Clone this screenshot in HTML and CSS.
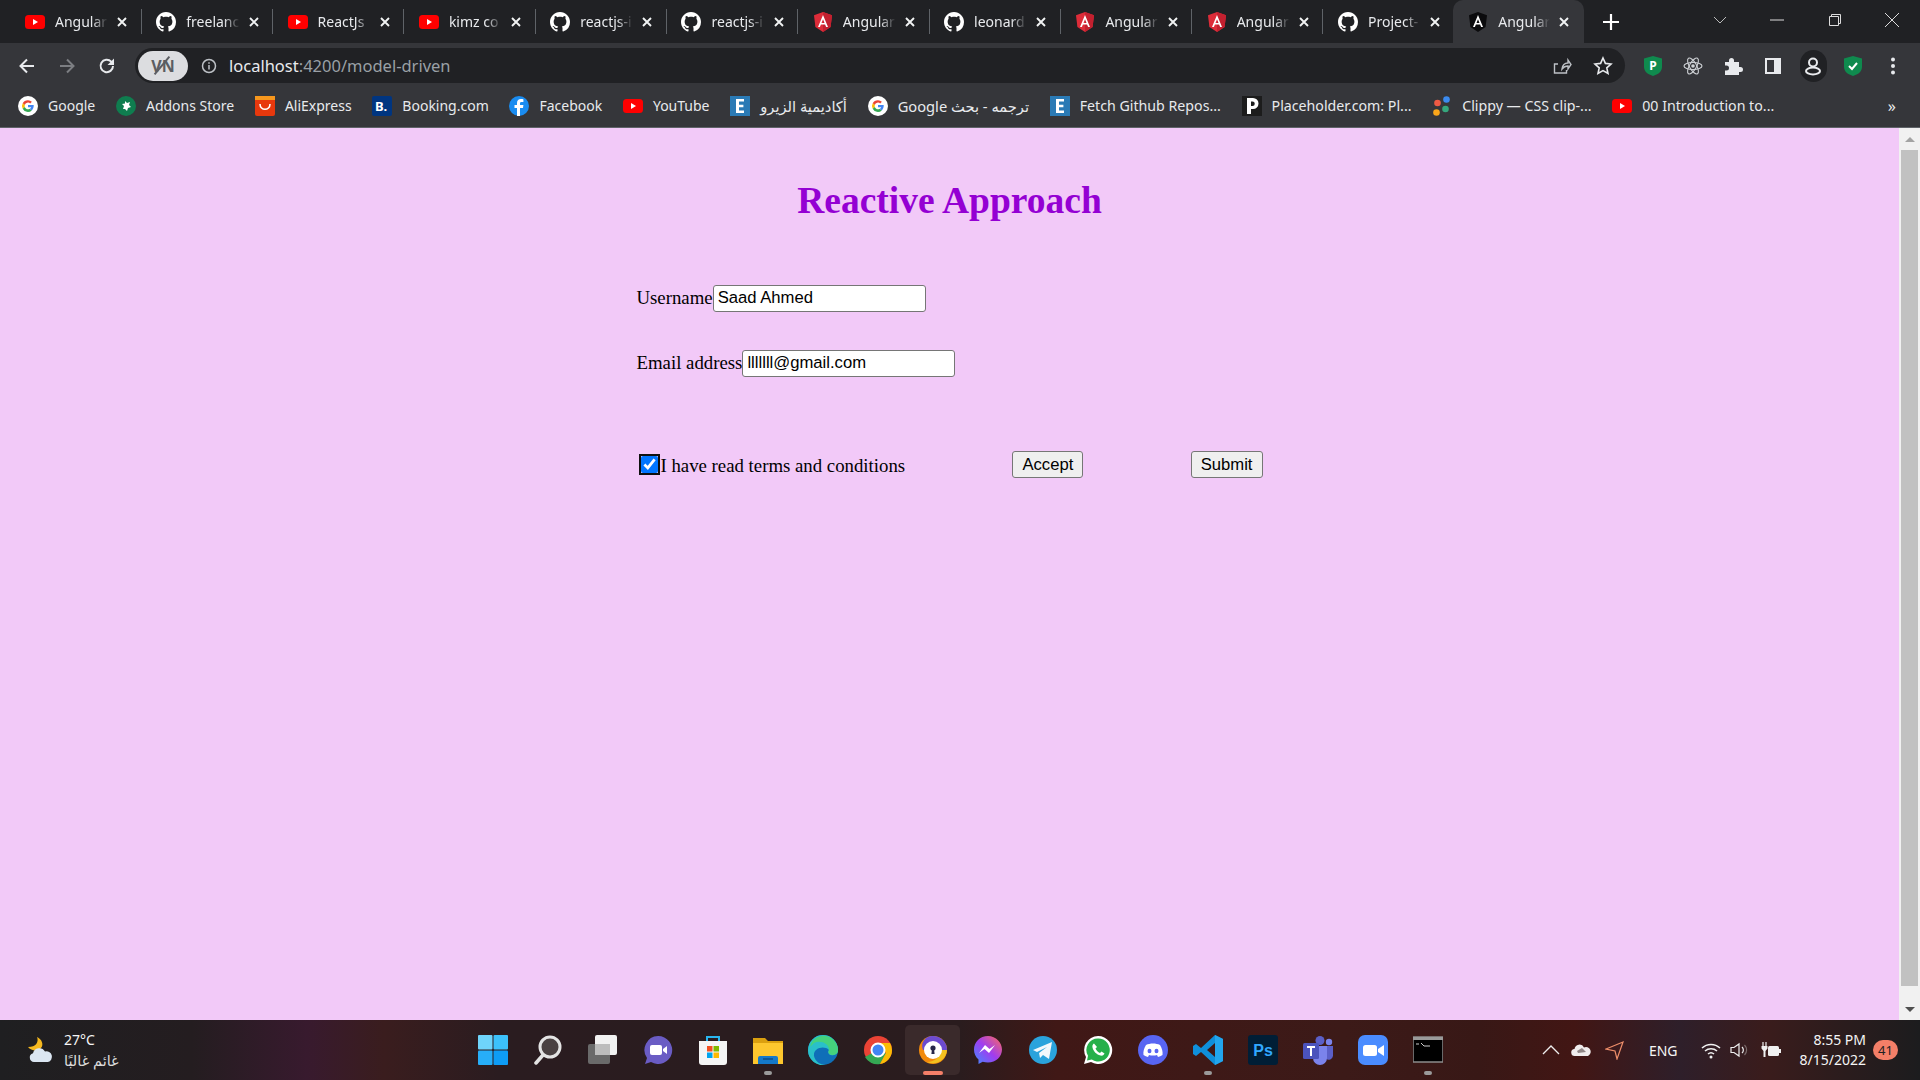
FILE: index.html
```html
<!DOCTYPE html>
<html lang="en">

<head>
    <meta charset="UTF-8">
    <title>Angular</title>
    <link rel="stylesheet" href="styles.css">
</head>

<body>
    <svg class="defs" width="0" height="0">
        <symbol id="yt" viewBox="0 0 20 14"><rect width="20" height="14" rx="3.5" fill="#f00"/><path d="M8 4l5 3-5 3z" fill="#fff"/></symbol>
        <symbol id="gh" viewBox="0 0 16 16"><path fill="#fff" d="M8 0C3.58 0 0 3.58 0 8c0 3.54 2.29 6.53 5.47 7.59.4.07.55-.17.55-.38 0-.19-.01-.82-.01-1.49-2.01.37-2.53-.49-2.69-.94-.09-.23-.48-.94-.82-1.13-.28-.15-.68-.52-.01-.53.63-.01 1.08.58 1.23.82.72 1.21 1.87.87 2.33.66.07-.52.28-.87.51-1.07-1.78-.2-3.64-.89-3.64-3.95 0-.87.31-1.59.82-2.15-.08-.2-.36-1.02.08-2.12 0 0 .67-.21 2.2.82.64-.18 1.32-.27 2-.27.68 0 1.36.09 2 .27 1.53-1.04 2.2-.82 2.2-.82.44 1.1.16 1.92.08 2.12.51.56.82 1.27.82 2.15 0 3.07-1.87 3.75-3.65 3.95.29.25.54.73.54 1.48 0 1.07-.01 1.93-.01 2.2 0 .21.15.46.55.38A8.013 8.013 0 0016 8c0-4.42-3.58-8-8-8z"/></symbol>
        <symbol id="ng" viewBox="0 0 18 20"><path d="M9 0L0 3.2l1.4 11.9L9 20l7.6-4.9L18 3.2z" fill="#dd2c39"/><path d="M9 0v20l7.6-4.9L18 3.2z" fill="#c3202f"/><path d="M9 3L4 15h1.9l1-2.6h4.2l1 2.6H14zm-1.5 7.9L9 7.2l1.5 3.7z" fill="#fff"/></symbol>
        <symbol id="ngb" viewBox="0 0 18 20"><path d="M9 0L0 3.2l1.4 11.9L9 20l7.6-4.9L18 3.2z" fill="#0b0b0d"/><path d="M9 3L4 15h1.9l1-2.6h4.2l1 2.6H14zm-1.5 7.9L9 7.2l1.5 3.7z" fill="#fff"/></symbol>
        <symbol id="g" viewBox="0 0 20 20"><circle cx="10" cy="10" r="10" fill="#fff"/><path d="M10 4.2a5.8 5.8 0 0 1 3.9 1.5l-1.7 1.7A3.4 3.4 0 0 0 6.8 9L4.7 7.3A5.8 5.8 0 0 1 10 4.2z" fill="#ea4335"/><path d="M4.7 7.3L6.8 9a3.5 3.5 0 0 0 0 2.1l-2.1 1.6a5.9 5.9 0 0 1 0-5.4z" fill="#fbbc05"/><path d="M6.8 11.1a3.4 3.4 0 0 0 5 1.7l2 1.6a5.8 5.8 0 0 1-9.1-1.7z" fill="#34a853"/><path d="M15.7 9H10v2.3h3.2a2.9 2.9 0 0 1-1.4 1.5l2 1.6c1.3-1.2 2-3.1 1.9-5.4z" fill="#4285f4"/></symbol>
        <symbol id="e" viewBox="0 0 20 20"><rect width="20" height="20" fill="#2a7ab5"/><path d="M6 3h8v2.6H9v3.2h4.4v2.5H9v3.1h5V17H6z" fill="#fff"/></symbol>
        <symbol id="x" viewBox="0 0 10 10"><path d="M1 1l8 8M9 1L1 9" stroke="#f1f3f4" stroke-width="1.900"/></symbol>
    </svg>

    <header class="tabstrip">
        <div class="tab"><svg class="fav-yt"><use href="#yt"/></svg><span class="tab-title">Angular</span><svg class="tab-x"><use href="#x"/></svg></div>
        <div class="tab"><svg class="fav"><use href="#gh"/></svg><span class="tab-title">freelanc</span><svg class="tab-x"><use href="#x"/></svg></div>
        <div class="tab"><svg class="fav-yt"><use href="#yt"/></svg><span class="tab-title">ReactJs</span><svg class="tab-x"><use href="#x"/></svg></div>
        <div class="tab"><svg class="fav-yt"><use href="#yt"/></svg><span class="tab-title">kimz co</span><svg class="tab-x"><use href="#x"/></svg></div>
        <div class="tab"><svg class="fav"><use href="#gh"/></svg><span class="tab-title">reactjs-i</span><svg class="tab-x"><use href="#x"/></svg></div>
        <div class="tab"><svg class="fav"><use href="#gh"/></svg><span class="tab-title">reactjs-i</span><svg class="tab-x"><use href="#x"/></svg></div>
        <div class="tab"><svg class="fav"><use href="#ng"/></svg><span class="tab-title">Angular</span><svg class="tab-x"><use href="#x"/></svg></div>
        <div class="tab"><svg class="fav"><use href="#gh"/></svg><span class="tab-title">leonard</span><svg class="tab-x"><use href="#x"/></svg></div>
        <div class="tab"><svg class="fav"><use href="#ng"/></svg><span class="tab-title">Angular</span><svg class="tab-x"><use href="#x"/></svg></div>
        <div class="tab"><svg class="fav"><use href="#ng"/></svg><span class="tab-title">Angular</span><svg class="tab-x"><use href="#x"/></svg></div>
        <div class="tab tab-last"><svg class="fav"><use href="#gh"/></svg><span class="tab-title">Project-</span><svg class="tab-x"><use href="#x"/></svg></div>
        <div class="tab tab-active"><svg class="fav"><use href="#ngb"/></svg><span class="tab-title">Angular</span><svg class="tab-x"><use href="#x"/></svg></div>
        <svg class="new-tab" viewBox="0 0 16 16"><path d="M8 0v16M0 8h16" stroke="#fff" stroke-width="2.200"/></svg>
        <div class="win-controls">
            <svg class="win-icon" viewBox="0 0 14 14"><path d="M1 4l6 6 6-6" fill="none" stroke="#bbb"/></svg>
            <svg class="win-icon" viewBox="0 0 14 14"><path d="M0 7h14" stroke="#ddd"/></svg>
            <svg class="win-icon" viewBox="0 0 14 14"><path d="M1.500 3.500h9v9h-9zM3.500 3.500v-2h9v9h-2" fill="none" stroke="#ddd"/></svg>
            <svg class="win-icon" viewBox="0 0 14 14"><path d="M0 0l14 14M14 0L0 14" stroke="#ddd"/></svg>
        </div>
    </header>

    <div class="toolbar">
        <svg class="nav-icon" viewBox="0 0 20 20"><path d="M17 10H4M10 3.500L3.500 10l6.500 6.500" fill="none" stroke="#e8eaed" stroke-width="2"/></svg>
        <svg class="nav-icon" viewBox="0 0 20 20"><path d="M3 10h13M10 3.500l6.500 6.500-6.500 6.500" fill="none" stroke="#7c7e82" stroke-width="2"/></svg>
        <svg class="nav-icon" viewBox="0 0 20 20"><path d="M16 10a6.200 6.200 0 1 1-1.800-4.400L16.500 8" fill="none" stroke="#e8eaed" stroke-width="2"/><path d="M17 2.500V9h-6.500z" fill="#e8eaed"/></svg>
        <div class="omnibox">
            <span class="vpn">V<i class="vpn-slash"></i>N</span>
            <svg class="info" viewBox="0 0 16 16"><circle cx="8" cy="8" r="6.500" fill="none" stroke="#bdc1c6" stroke-width="1.500"/><path d="M8 7v4.500M8 4.300v1.500" stroke="#bdc1c6" stroke-width="1.500"/></svg>
            <span class="url"><span class="host">localhost</span>:4200/model-driven</span>
            <svg class="omni-icon" viewBox="0 0 20 20"><path d="M7 17H2.500V8H6M10 13c.5-4 3-6 6-6V4l3 4.500-3 4.500v-3c-2.500 0-4.500 1-6 3zM2.500 17h12v-3" fill="none" stroke="#bdc1c6" stroke-width="1.400"/></svg>
            <svg class="omni-icon" viewBox="0 0 20 20"><path d="M10 2l2.400 5.400 5.600.6-4.200 3.800 1.200 5.700L10 14.600 5 17.500l1.200-5.700L2 8l5.600-.6z" fill="none" stroke="#e8eaed" stroke-width="1.600"/></svg>
        </div>
        <div class="ext-row">
            <svg class="ext" viewBox="0 0 18 20"><path d="M9 0l9 2.500V11c0 4.500-4 7.500-9 9-5-1.500-9-4.500-9-9V2.500z" fill="#0f8a4e"/><text x="9" y="14" class="shield-letter">P</text></svg>
            <svg class="ext" viewBox="0 0 20 20"><g fill="none" stroke="#cfd2d6" stroke-width="1.100"><ellipse cx="10" cy="10" rx="9" ry="3.500"/><ellipse cx="10" cy="10" rx="9" ry="3.500" transform="rotate(60 10 10)"/><ellipse cx="10" cy="10" rx="9" ry="3.500" transform="rotate(120 10 10)"/></g><circle cx="10" cy="10" r="1.800" fill="#cfd2d6"/></svg>
            <svg class="ext" viewBox="0 0 20 20"><path d="M2 6h4V4.500a2.500 2.500 0 0 1 5 0V6h5v5h1.500a2.500 2.500 0 0 1 0 5H16v3H2v-4.500h1.500a2.500 2.500 0 0 0 0-5H2z" fill="#e8eaed"/></svg>
            <svg class="ext" viewBox="0 0 20 20"><path d="M2 2h16v16H2z" fill="#e8eaed"/><path d="M4 4h7v12H4z" fill="#35363a"/></svg>
            <span class="avatar"><svg class="avatar-icon" viewBox="0 0 20 20"><circle cx="10" cy="6.500" r="4" fill="none" stroke="#e8eaed" stroke-width="2"/><ellipse cx="10" cy="15" rx="7" ry="3.500" fill="none" stroke="#e8eaed" stroke-width="2"/></svg></span>
            <svg class="ext" viewBox="0 0 18 20"><path d="M9 0l9 2.500V11c0 4.500-4 7.500-9 9-5-1.500-9-4.500-9-9V2.500z" fill="#0f8a4e"/><path d="M5 10l3 3 5-6" fill="none" stroke="#fff" stroke-width="2"/></svg>
            <svg class="ext" viewBox="0 0 20 20"><circle cx="10" cy="3.500" r="2" fill="#e8eaed"/><circle cx="10" cy="10" r="2" fill="#e8eaed"/><circle cx="10" cy="16.500" r="2" fill="#e8eaed"/></svg>
        </div>
    </div>

    <nav class="bookmarks">
        <a class="bm"><svg class="bm-icon"><use href="#g"/></svg>Google</a>
        <a class="bm"><svg class="bm-icon" viewBox="0 0 20 20"><circle cx="10" cy="10" r="10" fill="#0f7d4f"/><path d="M9 5l2 2 3-1-1 3 2 2-3 1-1 3-2-2-2 0 1-3-2-2 3-.5z" fill="#fff"/></svg>Addons Store</a>
        <a class="bm"><svg class="bm-icon" viewBox="0 0 20 20"><rect width="20" height="20" rx="2" fill="#e8380d"/><rect width="20" height="4" fill="#f7971d"/><path d="M5 8c0 7 10 7 10 0" fill="none" stroke="#fff" stroke-width="1.600"/></svg>AliExpress</a>
        <a class="bm"><svg class="bm-icon" viewBox="0 0 20 20"><rect width="20" height="20" rx="2" fill="#003580"/><text x="3" y="15" class="bk-letter">B.</text></svg>Booking.com</a>
        <a class="bm"><svg class="bm-icon" viewBox="0 0 20 20"><circle cx="10" cy="10" r="10" fill="#1a8cf0"/><path d="M11 20v-8h3l.4-3H11V7.500c0-1 .4-1.500 1.600-1.500h1.800V3.200C14 3.100 13 3 12 3 9.500 3 8 4.500 8 7v2H5.500v3H8v8z" fill="#fff"/></svg>Facebook</a>
        <a class="bm"><svg class="fav-yt"><use href="#yt"/></svg>YouTube</a>
        <a class="bm"><svg class="bm-icon"><use href="#e"/></svg><span class="bm-ar" dir="rtl">أكاديمية الزيرو</span></a>
        <a class="bm"><svg class="bm-icon"><use href="#g"/></svg><span class="bm-ar" dir="rtl">ترجمه - بحث Google</span></a>
        <a class="bm bm-wide"><svg class="bm-icon"><use href="#e"/></svg>Fetch Github Repos...</a>
        <a class="bm bm-wide"><svg class="bm-icon" viewBox="0 0 20 20"><rect width="20" height="20" fill="#1c1c1c"/><path d="M5 2h6a5 5 0 0 1 0 11H9v5H5zM9 5.500V10h1.500a2.200 2.200 0 0 0 0-4.500z" fill="#fff"/></svg>Placeholder.com: Pl...</a>
        <a class="bm bm-wide"><svg class="bm-icon" viewBox="0 0 20 20"><circle cx="14.500" cy="3.500" r="3.300" fill="#3b8bf0"/><circle cx="5.500" cy="7" r="3.300" fill="#ef5a44"/><circle cx="13.500" cy="13" r="3.300" fill="#35a77d"/><circle cx="4.500" cy="16.500" r="3.300" fill="#f9a51a"/></svg>Clippy — CSS clip-...</a>
        <a class="bm bm-wide"><svg class="fav-yt"><use href="#yt"/></svg>00 Introduction to...</a>
        <span class="bm-more">»</span>
    </nav>

    <div class="viewport">
        <main class="page">
            <h1 class="page-title">Reactive Approach</h1>
            <form class="signup">
                <div class="field"><label>Username</label><input type="text" value="Saad Ahmed"></div>
                <div class="field"><label>Email address</label><input type="text" value="lllllll@gmail.com"></div>
                <div class="actions">
                    <div class="terms"><input type="checkbox" class="terms-box" checked><span class="terms-text">I have read terms and conditions</span></div>
                    <button type="button" class="btn">Accept</button>
                    <button type="button" class="btn">Submit</button>
                </div>
            </form>
        </main>
        <div class="scrollbar">
            <span class="arrow-up"></span>
            <div class="thumb"></div>
            <span class="arrow-down"></span>
        </div>
    </div>

    <footer class="taskbar">
        <div class="weather">
            <svg class="weather-icon" viewBox="0 0 28 26"><path d="M11 0c2 5-1 10-9 10 3 4 10 5 13 1 3-3 1-9-4-11z" fill="#f5b81f"/><path d="M8 25a4.500 4.500 0 0 1-1-8.800 6.500 6.500 0 0 1 12-1.700A5.300 5.300 0 0 1 22 25z" fill="#dbe6f2"/></svg>
            <div class="weather-text"><span>27°C</span><span class="weather-sub" dir="rtl">غائم غالبًا</span></div>
        </div>
        <div class="task-icons">
            <span class="task"><svg class="task-svg" viewBox="0 0 30 30"><rect x="0" y="0" width="14.500" height="14.500" rx="1" fill="#6fd4fb"/><rect x="15.500" y="0" width="14.500" height="14.500" rx="1" fill="#3cc1fb"/><rect x="0" y="15.500" width="14.500" height="14.500" rx="1" fill="#27aef8"/><rect x="15.500" y="15.500" width="14.500" height="14.500" rx="1" fill="#0e9cf5"/></svg></span>
            <span class="task"><svg class="task-svg" viewBox="0 0 30 30"><circle cx="17" cy="12" r="10" fill="#4a4142" stroke="#e4e4e4" stroke-width="3"/><path d="M10 20l-7 8" stroke="#e4e4e4" stroke-width="3.500" stroke-linecap="round"/></svg></span>
            <span class="task"><svg class="task-svg" viewBox="0 0 30 30"><rect x="0" y="9" width="22" height="20" rx="2" fill="#6a6a6a"/><rect x="7" y="0" width="22" height="20" rx="2" fill="#f2f2f2"/><rect x="7" y="9" width="15" height="11" fill="#bdbdbd"/></svg></span>
            <span class="task"><svg class="task-svg" viewBox="0 0 30 30"><path d="M15 1a14 14 0 1 1-7 26l-6 2 2-6A14 14 0 0 1 15 1z" fill="#6a5cc4"/><rect x="7" y="10" width="12" height="10" rx="2" fill="#fff"/><path d="M20 14l4-3v8l-4-3z" fill="#fff"/></svg></span>
            <span class="task"><svg class="task-svg" viewBox="0 0 30 30"><path d="M1 6h28v21a3 3 0 0 1-3 3H4a3 3 0 0 1-3-3z" fill="#f5f5f5"/><path d="M9 6V2h12v4" fill="none" stroke="#29b6f0" stroke-width="2"/><rect x="9" y="11" width="5.500" height="5.500" fill="#f25022"/><rect x="15.500" y="11" width="5.500" height="5.500" fill="#7fba00"/><rect x="9" y="17.500" width="5.500" height="5.500" fill="#00a4ef"/><rect x="15.500" y="17.500" width="5.500" height="5.500" fill="#ffb900"/></svg></span>
            <span class="task task-open"><svg class="task-svg" viewBox="0 0 30 30"><path d="M0 3h12l3 3h15v23H0z" fill="#dba00f"/><path d="M0 8h30v21H0z" fill="#fdc72e"/><path d="M5 29v-6a2 2 0 0 1 2-2h16a2 2 0 0 1 2 2v6z" fill="#1479c9"/><path d="M10 24h10" stroke="#0c4d85" stroke-width="1.500"/></svg></span>
            <span class="task"><svg class="task-svg" viewBox="0 0 30 30"><circle cx="15" cy="15" r="15" fill="#0f6fb8"/><path d="M0 15A15 15 0 0 1 30 15c0 2-1 4-4 5-4 1-7-1-5-5-5-5-16-2-15 6 1 5 6 9 12 9A15 15 0 0 1 0 15z" fill="#2ac0c8"/><path d="M2 12C4 3 12 0 18 1c8 1 12 9 12 14 0 2-1 5-5 5-3 0-6-2-4-5C21 8 12 5 6 8z" fill="#45d27d"/></svg></span>
            <span class="task"><svg class="task-svg" viewBox="0 0 30 30"><circle cx="15" cy="15" r="14" fill="#ea4335"/><path d="M2 22A14 14 0 0 0 17 29l6-11H9z" fill="#34a853"/><path d="M29 15a14 14 0 0 0-2-7H15l8 10-6 11A14 14 0 0 0 29 15z" fill="#fbbc05"/><circle cx="15" cy="15" r="6.500" fill="#4285f4" stroke="#fff" stroke-width="2"/></svg></span>
            <span class="task task-active"><svg class="task-svg" viewBox="0 0 30 30"><circle cx="15" cy="15" r="14" fill="#f28a0c"/><path d="M15 1a14 14 0 0 1 14 14H5A10 10 0 0 1 15 1z" fill="#6c4bd0"/><path d="M29 15a14 14 0 0 1-20 12c8 0 13-5 14-12z" fill="#f4c21f"/><circle cx="15" cy="15" r="9" fill="#fff"/><circle cx="15" cy="13" r="2.600" fill="#26264a"/><path d="M14 14h2l.6 5h-3.200z" fill="#26264a"/></svg></span>
            <span class="task"><svg class="task-svg" viewBox="0 0 30 30"><defs><linearGradient id="msgr" x1="0" y1="1" x2="1" y2="0"><stop offset="0" stop-color="#3f8cff"/><stop offset=".5" stop-color="#a03cf0"/><stop offset="1" stop-color="#ff6c5c"/></linearGradient></defs><path d="M15 1C7 1 1 7 1 14.500c0 4 1.600 7.500 4.500 10V29l4.200-2.300c1.600.5 3.500.8 5.300.8 8 0 14-6 14-13S23 1 15 1z" fill="url(#msgr)"/><path d="M6 18l6-8 4.500 4 5.500-4-6 8-4.500-4z" fill="#fff"/></svg></span>
            <span class="task"><svg class="task-svg" viewBox="0 0 30 30"><circle cx="15" cy="15" r="14" fill="#2aa3dc"/><path d="M5 15l19-8-3 17-6-4-3 3-1-5 8-6-10 5z" fill="#f3f8fb"/></svg></span>
            <span class="task"><svg class="task-svg" viewBox="0 0 30 30"><path d="M15 1a14 14 0 0 0-12 21L1 29l7-2A14 14 0 1 0 15 1z" fill="#fff"/><path d="M15 3.500a11.500 11.500 0 0 0-10 17.300L4 25.500l4.800-1A11.500 11.500 0 1 0 15 3.500z" fill="#25b04a"/><path d="M11 8.500c-1 .5-2 2-1.500 4 1 4 4 7 8 8 2 .5 3.500-.5 4-2l-3-2-1.500 1.500c-2-1-3.500-2.500-4.500-4.500l1.500-1.500z" fill="#fff"/></svg></span>
            <span class="task"><svg class="task-svg" viewBox="0 0 30 30"><circle cx="15" cy="15" r="15" fill="#5865f2"/><path d="M8 10c4-2 10-2 14 0 2 3 3 7 2.500 10-1.500 1-3 1.700-4.500 2l-1-2c-2.500.7-5.500.7-8 0l-1 2c-1.500-.3-3-1-4.500-2C5 17 6 13 8 10z" fill="#fff"/><ellipse cx="11.500" cy="16" rx="2" ry="2.300" fill="#5865f2"/><ellipse cx="18.500" cy="16" rx="2" ry="2.300" fill="#5865f2"/></svg></span>
            <span class="task task-open"><svg class="task-svg" viewBox="0 0 30 30"><path d="M22 0l8 4v22l-8 4-14-13-5 4-3-2v-8l3-2 5 4zM22 8l-8 7 8 7z" fill="#0f8fdb"/><path d="M22 0l8 4v22l-8 4z" fill="#22a6ee"/></svg></span>
            <span class="task"><svg class="task-svg" viewBox="0 0 30 30"><rect width="30" height="30" rx="3" fill="#001e36"/><text x="15" y="21" class="ps-letters">Ps</text></svg></span>
            <span class="task"><svg class="task-svg" viewBox="0 0 30 30"><circle cx="17" cy="5.500" r="4.500" fill="#5b5fc7"/><circle cx="26" cy="7" r="3.200" fill="#7b83eb"/><path d="M21 11h9v10a4.500 4.500 0 0 1-7 3z" fill="#5b5fc7"/><path d="M9 11h15v12a7 7 0 0 1-14 0z" fill="#7b83eb"/><rect x="0" y="8" width="16" height="16" rx="1.500" fill="#4b53bc"/><path d="M4 11h8v2H9v8H7v-8H4z" fill="#fff"/></svg></span>
            <span class="task"><svg class="task-svg" viewBox="0 0 30 30"><rect width="30" height="30" rx="7" fill="#4a8cff"/><rect x="5" y="10" width="14" height="11" rx="2.500" fill="#fff"/><path d="M20 14l6-4v11l-6-4z" fill="#fff"/></svg></span>
            <span class="task task-open"><svg class="task-svg" viewBox="0 0 30 30"><rect y="2" width="30" height="25" fill="#000" stroke="#8c8c8c" stroke-width="1.500"/><rect y="2" width="30" height="3" fill="#9a9a9a"/><path d="M3 9h3M8 8l3 3h6" stroke="#ccc"/></svg></span>
        </div>
        <div class="tray">
            <svg class="tray-icon" viewBox="0 0 20 20"><path d="M2 14l8-8 8 8" fill="none" stroke="#eee" stroke-width="1.300"/></svg>
            <svg class="tray-icon tray-cloud" viewBox="0 0 20 20"><path d="M4 16a3.500 3.500 0 0 1-.5-7 5 5 0 0 1 9.500-1.500A4.500 4.500 0 0 1 17 16z" fill="#f0eded"/><path d="M6 11l5-3 4 4-8 1z" fill="#8f8686"/></svg>
            <svg class="tray-icon tray-nav" viewBox="0 0 20 20"><path d="M1 9L18 2l-6 17-2-8z" fill="none" stroke="#ee8e6a" stroke-width="1.200"/></svg>
            <span class="lang">ENG</span>
            <svg class="tray-icon" viewBox="0 0 20 20"><path d="M1 8a13 13 0 0 1 18 0M4 11a9 9 0 0 1 12 0M7 14a4.500 4.500 0 0 1 6 0" fill="none" stroke="#f0f0f0" stroke-width="1.500"/><circle cx="10" cy="17" r="1.500" fill="#f0f0f0"/></svg>
            <svg class="tray-icon tray-sound" viewBox="0 0 20 20"><path d="M2 7.500h3L10 4v12l-5-3.500H2z" fill="none" stroke="#f0f0f0" stroke-width="1.200"/><path d="M13 7a4 4 0 0 1 0 6" fill="none" stroke="#f0f0f0" stroke-width="1.200"/><path d="M15.500 5a7 7 0 0 1 0 10" fill="none" stroke="#7a6a6a" stroke-width="1.200"/></svg>
            <svg class="tray-icon tray-power" viewBox="0 0 20 20"><rect x="7" y="6" width="11" height="10" rx="1.500" fill="#f0f0f0"/><rect x="18" y="9" width="2" height="4" fill="#f0f0f0"/><path d="M2 2v4M5 2v4" stroke="#f0f0f0" stroke-width="1.200"/><path d="M0.500 6h6v2.500L4.500 11v6h-2v-6L.5 8.500z" fill="#f0f0f0"/></svg>
            <div class="clock"><span>8:55 PM</span><span>8/15/2022</span></div>
            <span class="badge">41</span>
        </div>
    </footer>
</body>

</html>
```

FILE: styles.css
```css
* {
    box-sizing: border-box;
}

html,
body {
    height: 100%;
    margin: 0;
    overflow: hidden;
}

body {
    display: flex;
    flex-direction: column;
    font-family: "Noto Sans", "DejaVu Sans", sans-serif;
    background-color: #202124;
}

.defs {
    display: block;
    height: 0;
}

/* tab strip */
.tabstrip {
    display: flex;
    align-items: center;
    height: 43px;
    padding-left: 10.500px;
    background-color: #202124;
    flex: none;
}

.tab {
    display: flex;
    align-items: center;
    width: 131.300px;
    height: 43px;
    padding: 0 14.500px 0 14.500px;
    gap: 10px;
    color: #e8eaed;
    font-size: 14px;
    position: relative;
    flex: none;
}

.tab::after {
    content: "";
    position: absolute;
    right: 0;
    top: 9px;
    height: 25px;
    width: 1px;
    background-color: #5f6368;
}

.tab-last::after,
.tab-active::after {
    display: none;
}

.tab-active {
    width: 131px;
    margin-left: -2px;
    padding: 0 15px 0 15.500px;
    background-color: #35363a;
    border-radius: 10px 10px 0 0;
}

.tab-title {
    flex: 1;
    min-width: 0;
    margin-right: -3px;
    overflow: hidden;
    white-space: nowrap;
    -webkit-mask-image: linear-gradient(to right, #000 68%, transparent 96%);
    mask-image: linear-gradient(to right, #000 68%, transparent 96%);
}

.tab-x {
    width: 10px;
    height: 10px;
    flex: none;
}

.fav,
.bm-icon,
.fav-yt {
    width: 20px;
    height: 20px;
    flex: none;
}

.new-tab {
    width: 16px;
    height: 16px;
    margin-left: 19px;
    flex: none;
}

.win-controls {
    display: flex;
    align-items: center;
    margin-left: auto;
    gap: 43.500px;
    padding: 0 21px 4px 0;
}

.win-icon {
    width: 14px;
    height: 14px;
}

/* toolbar and address bar */
.toolbar {
    display: flex;
    align-items: center;
    height: 43px;
    padding: 2px 0 0 17px;
    background-color: #35363a;
    flex: none;
}

.nav-icon {
    width: 20px;
    height: 20px;
    margin-right: 20px;
    flex: none;
}

.omnibox {
    display: flex;
    align-items: center;
    width: 1490px;
    height: 35px;
    margin-left: -2px;
    border-radius: 18px;
    background-color: #202124;
    padding-left: 3px;
    padding-right: 12.500px;
}

.vpn {
    display: flex;
    align-items: center;
    justify-content: center;
    width: 50px;
    height: 30px;
    border-radius: 15px;
    background-color: #dcdde0;
    color: #5b5d62;
    font-size: 16px;
    font-weight: bold;
}

.vpn-slash {
    display: block;
    width: 2px;
    height: 23px;
    margin: 0 -1px;
    background-color: #5b5d62;
    transform: rotate(40deg);
}

.info {
    width: 16px;
    height: 16px;
    margin-left: 13px;
}

.url {
    margin-left: 12px;
    color: #9aa0a6;
    font-size: 16.500px;
    flex: 1;
}

.host {
    color: #e8eaed;
}

.omni-icon {
    width: 20px;
    height: 20px;
    margin-left: 20.500px;
}

.ext-row {
    display: flex;
    align-items: center;
    margin-left: 18px;
    gap: 20px;
}

.ext {
    width: 20px;
    height: 20px;
    flex: none;
}

.shield-letter {
    font-size: 12px;
    font-weight: bold;
    fill: #fff;
    text-anchor: middle;
}

.avatar {
    display: flex;
    align-items: center;
    justify-content: center;
    width: 27px;
    height: 32px;
    margin: 0 -3.500px;
    border-radius: 14px;
    background-color: #202124;
}

.avatar-icon {
    width: 20px;
    height: 20px;
}

/* bookmarks bar */
.bookmarks {
    display: flex;
    align-items: center;
    height: 42px;
    padding: 0 0 2px 18px;
    gap: 20.700px;
    background-color: #35363a;
    color: #e8eaed;
    font-size: 14px;
    border-bottom: 1px solid #5f6368;
    flex: none;
}

.bm {
    display: flex;
    align-items: center;
    gap: 10px;
    white-space: nowrap;
}

.bm-wide {
    font-size: 14.200px;
}

.bm-ar {
    font-size: 14.700px;
}

.bk-letter {
    font-size: 13px;
    font-weight: bold;
    fill: #fff;
}

.bm-more {
    margin-left: auto;
    margin-right: 24px;
    font-size: 16px;
}

/* page */
.viewport {
    display: flex;
    flex: 1;
    min-height: 0;
}

.page {
    flex: 1;
    background-color: #f2c9f8;
    font-family: "Liberation Serif", serif;
    font-size: 18.800px;
    color: #000;
}

.page-title {
    margin: 0;
    padding-top: 50px;
    text-align: center;
    font-size: 37.500px;
    line-height: 46px;
    font-weight: bold;
    color: #9400d3;
}

.signup {
    width: 626px;
    margin: 61px auto 0;
}

.field {
    display: flex;
    align-items: center;
    height: 27px;
    margin-bottom: 38px;
}

.field label {
    flex: none;
    padding-bottom: 2px;
}

.field input {
    width: 213px;
    height: 27px;
    padding: 0 4px 2px;
    border: 1px solid #767676;
    border-radius: 3px;
    font-family: "Liberation Sans", sans-serif;
    font-size: 16.670px;
    background-color: #fff;
    color: #000;
}

.actions {
    display: flex;
    align-items: center;
    justify-content: space-between;
    margin-top: 74px;
}

.terms {
    display: flex;
    align-items: center;
}

.terms-box {
    width: 17px;
    height: 17px;
    margin: 0 2.500px 0 4.500px;
    accent-color: #0075ff;
    outline: 2.500px solid #101010;
    border-radius: 3px;
}

.terms-text {
    padding-top: 3px;
}

.btn {
    height: 27px;
    padding: 1px 9px;
    border: 1px solid #767676;
    border-radius: 3px;
    background-color: #efefef;
    font-family: "Liberation Sans", sans-serif;
    font-size: 16.670px;
    color: #000;
}

/* scrollbar */
.scrollbar {
    display: flex;
    flex-direction: column;
    align-items: center;
    width: 21px;
    background-color: #f1f1f1;
}

.arrow-up,
.arrow-down {
    display: block;
    width: 0;
    height: 0;
    border-left: 5px solid transparent;
    border-right: 5px solid transparent;
    flex: none;
}

.arrow-up {
    margin: 9px 0 8px;
    border-bottom: 5px solid #a3a3a3;
}

.arrow-down {
    margin: 21px 0 8px;
    border-top: 5px solid #505050;
}

.thumb {
    flex: 1;
    width: 17px;
    background-color: #c1c1c1;
}

/* windows taskbar */
.taskbar {
    display: flex;
    align-items: center;
    height: 60px;
    position: relative;
    background: linear-gradient(to right, #1f1f21 0%, #241d20 10%, #381a2e 16%, #3a1d1e 20%, #2a1c20 26%, #2a1c1e 50%, #401816 55%, #3c1a18 70%, #381816 77%, #421614 82%, #2e1f2a 87.500%, #3a1c1c 92%, #1c1c1e 100%);
    color: #f5f5f5;
    flex: none;
}

.weather {
    display: flex;
    align-items: center;
    gap: 10px;
    padding-left: 26px;
    width: 465px;
    flex: none;
}

.weather-icon {
    width: 28px;
    height: 26px;
}

.weather-text {
    display: flex;
    flex-direction: column;
    font-size: 14px;
    line-height: 21px;
}

.weather-sub {
    color: #dcdcdc;
    font-size: 14.500px;
    text-align: right;
}

.task-icons {
    display: flex;
    flex: none;
}

.task {
    display: flex;
    align-items: center;
    justify-content: center;
    width: 55px;
    height: 50px;
    position: relative;
}

.task-svg {
    width: 30px;
    height: 30px;
}

.task-open::after,
.task-active::after {
    content: "";
    position: absolute;
    left: 50%;
    bottom: 0;
    width: 8px;
    height: 4px;
    margin-left: -4px;
    border-radius: 2px;
    background-color: #9a9a9a;
}

.task-active {
    background-color: #3a2a2b;
    border-radius: 5px;
}

.task-active::after {
    width: 20px;
    margin-left: -10px;
    background-color: #f47f68;
}

.tray {
    display: flex;
    align-items: center;
    margin-left: auto;
    padding-right: 22px;
    font-size: 14px;
}

.tray-icon {
    width: 20px;
    height: 20px;
}

.tray-cloud {
    margin-left: 10px;
}

.tray-nav {
    margin-left: 14px;
}

.lang {
    margin: 0 23px 0 24px;
}

.tray-sound {
    margin-left: 8px;
}

.tray-power {
    margin-left: 12px;
}

.clock {
    display: flex;
    flex-direction: column;
    align-items: flex-end;
    margin-left: 19px;
    line-height: 20px;
}

.badge {
    display: flex;
    align-items: center;
    justify-content: center;
    width: 25px;
    height: 20px;
    margin-left: 7px;
    border-radius: 10px;
    background-color: #f47f68;
    color: #222;
    font-size: 13px;
}

.ps-letters {
    font-family: "Liberation Sans", sans-serif;
    font-size: 16px;
    font-weight: bold;
    fill: #31a8ff;
    text-anchor: middle;
}
```
